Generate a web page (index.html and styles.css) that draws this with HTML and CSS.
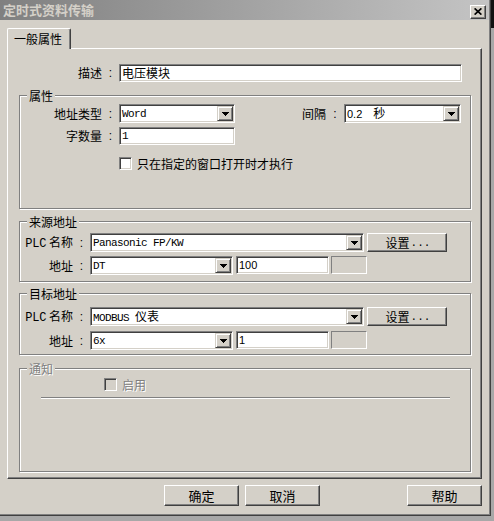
FILE: index.html
```html
<!DOCTYPE html>
<html>
<head>
<meta charset="utf-8">
<title>定时式资料传输</title>
<link rel="stylesheet" href="styles.css">
</head>
<body>
<div class="window">
  <div class="frame">
    <div class="titlebar">
      <span class="title">定时式资料传输</span>
      <span class="close"><svg width="8" height="7" viewBox="0 0 8 7"><path d="M0.6 0.4L7.4 6.6M7.4 0.4L0.6 6.6" stroke="#000" stroke-width="1.7" fill="none"/></svg></span>
    </div>
    <div class="content">
      <div class="tabs"><div class="tab">一般属性</div></div>
      <div class="panel">
        <div class="row r-desc">
          <span class="lbl w94">描述</span><span class="colon">:</span>
          <div class="edit w343"><span class="cjk">电压模块</span></div>
        </div>

        <div class="group g-attr">
          <div class="legend">属性</div>
          <div class="row r-a1">
            <span class="lbl w82">地址类型</span><span class="colon">:</span>
            <div class="combo w116"><span class="val mono">Word</span><span class="dd"><svg width="7" height="4" viewBox="0 0 7 4"><polygon points="0,0 7,0 3.5,4" fill="#000"/></svg></span></div>
            <span class="lbl w24 gap67">间隔</span><span class="colon w18">:</span>
            <div class="combo w117"><span class="val sans">0.2<span class="sec">秒</span></span><span class="dd"><svg width="7" height="4" viewBox="0 0 7 4"><polygon points="0,0 7,0 3.5,4" fill="#000"/></svg></span></div>
          </div>
          <div class="row r-a2">
            <span class="lbl w82">字数量</span><span class="colon">:</span>
            <div class="edit w116"><span class="mono">1</span></div>
          </div>
          <div class="row r-a3">
            <span class="cb ml99"></span><span class="cblabel">只在指定的窗口打开时才执行</span>
          </div>
        </div>

        <div class="group g-src">
          <div class="legend">来源地址</div>
          <div class="row r-s1">
            <span class="lbl w53"><span class="plc">PLC</span> 名称</span><span class="colon">:</span>
            <div class="combo w274"><span class="val mono">Panasonic FP/KW</span><span class="dd"><svg width="7" height="4" viewBox="0 0 7 4"><polygon points="0,0 7,0 3.5,4" fill="#000"/></svg></span></div>
            <div class="pbtn setbtn">设置<span class="dots">...</span></div>
          </div>
          <div class="row r-s2">
            <span class="lbl w53">地址</span><span class="colon">:</span>
            <div class="combo w143"><span class="val mono">DT</span><span class="dd"><svg width="7" height="4" viewBox="0 0 7 4"><polygon points="0,0 7,0 3.5,4" fill="#000"/></svg></span></div>
            <div class="edit w93 ml3"><span class="sans">100</span></div>
            <div class="disbox"></div>
          </div>
        </div>

        <div class="group g-dst">
          <div class="legend">目标地址</div>
          <div class="row r-d1">
            <span class="lbl w53"><span class="plc">PLC</span> 名称</span><span class="colon">:</span>
            <div class="combo w274"><span class="val mono">MODBUS <span class="cjk">仪表</span></span><span class="dd"><svg width="7" height="4" viewBox="0 0 7 4"><polygon points="0,0 7,0 3.5,4" fill="#000"/></svg></span></div>
            <div class="pbtn setbtn">设置<span class="dots">...</span></div>
          </div>
          <div class="row r-d2">
            <span class="lbl w53">地址</span><span class="colon">:</span>
            <div class="combo w143"><span class="val mono">6x</span><span class="dd"><svg width="7" height="4" viewBox="0 0 7 4"><polygon points="0,0 7,0 3.5,4" fill="#000"/></svg></span></div>
            <div class="edit w93 ml3"><span class="sans">1</span></div>
            <div class="disbox"></div>
          </div>
        </div>

        <div class="group g-notify">
          <div class="legend disabled">通知</div>
          <div class="row r-n1">
            <span class="cb off ml84"></span><span class="cblabel disabled">启用</span>
          </div>
          <div class="sep"></div>
        </div>
      </div>

      <div class="buttons">
        <div class="pbtn dlgbtn mr6">确定</div>
        <div class="pbtn dlgbtn mr87">取消</div>
        <div class="pbtn dlgbtn">帮助</div>
      </div>
    </div>
  </div>
</div>
</body>
</html>
```

FILE: styles.css
```css
* { box-sizing: border-box; }

html, body { margin: 0; padding: 0; }

body {
  width: 494px;
  height: 521px;
  overflow: hidden;
  background: linear-gradient(#111 0, #111 28px, #a8a8a8 28px);
  font-family: "Noto Sans CJK SC", sans-serif;
  font-size: 12px;
  color: #000;
}

.window {
  width: 491px;
  height: 516px;
  background: #808080;
  border-right: 1px solid #404040;
  border-bottom: 1px solid #404040;
  padding: 0 1px 1px 0;
}

.frame {
  width: 100%;
  height: 100%;
  background: #d4d0c8;
}

.titlebar {
  height: 20px;
  background: linear-gradient(to right, #808080, #c4c4c4);
  display: flex;
  justify-content: space-between;
  align-items: flex-start;
}

.title {
  color: #d4d0c8;
  font-weight: bold;
  font-size: 13px;
  line-height: 20px;
  padding-left: 3px;
}

.close {
  width: 16px;
  height: 14px;
  margin: 5px 3px 0 0;
  background: #d4d0c8;
  border: 1px solid;
  border-color: #fff #404040 #404040 #fff;
  box-shadow: inset -1px -1px 0 #808080;
  display: flex;
  align-items: center;
  justify-content: center;
  padding-bottom: 1px;
}
.close svg { display: block; }

.content { padding-left: 7px; }

.tabs { display: flex; margin-top: 8px; }

.tab {
  position: relative;
  z-index: 1;
  width: 64px;
  height: 21px;
  margin-bottom: -1px;
  background: #d4d0c8;
  border-left: 1px solid #fff;
  border-top: 1px solid #fff;
  border-right: 1px solid #404040;
  box-shadow: inset -1px 0 0 #808080;
  border-top-left-radius: 2px;
  border-top-right-radius: 2px;
  padding-left: 6px;
  line-height: 19px;
  white-space: nowrap;
}

.panel {
  width: 475px;
  height: 431px;
  border: 1px solid;
  border-color: #fff #404040 #404040 #fff;
  box-shadow: inset -1px -1px 0 #808080;
}

.row { display: flex; align-items: center; }

.lbl { text-align: right; white-space: nowrap; line-height: 14px; }
.plc {
  font-family: "Liberation Mono", monospace;
  font-size: 12px;
  letter-spacing: -0.2px;
  vertical-align: 0.5px;
}
.colon {
  width: 17px;
  text-align: center;
  font-family: "Liberation Sans", sans-serif;
  font-size: 12px;
  line-height: 14px;
}
.w18 { width: 18px; }
.w24 { width: 24px; flex: none; }
.w53 { width: 53px; flex: none; }
.w82 { width: 82px; flex: none; }
.w94 { width: 94px; flex: none; }
.gap67 { margin-left: 67px; }

.w93 { width: 93px; }
.w116 { width: 116px; }
.w117 { width: 117px; }
.w143 { width: 143px; }
.w274 { width: 274px; }
.w343 { width: 343px; }
.ml3 { margin-left: 3px; }
.ml84 { margin-left: 84px; }
.ml99 { margin-left: 99px; }
.mr6 { margin-right: 6px; }
.mr87 { margin-right: 87px; }

.r-desc { margin-top: 15px; height: 18px; }

.edit {
  height: 18px;
  flex: none;
  background: #fff;
  border: 1px solid;
  border-color: #808080 #fff #fff #808080;
  box-shadow: inset 1px 1px 0 #404040, inset -1px -1px 0 #d4d0c8;
  padding-left: 2px;
  display: flex;
  align-items: center;
  overflow: hidden;
  white-space: nowrap;
}

.combo {
  height: 19px;
  flex: none;
  display: flex;
  align-items: center;
  background: #fff;
  border: 1px solid;
  border-color: #808080 #fff #fff #808080;
  box-shadow: inset 1px 1px 0 #404040, inset -1px -1px 0 #d4d0c8;
  padding-left: 2px;
  white-space: nowrap;
}
.combo .val { flex: 1; }

.dd {
  width: 16px;
  height: 15px;
  margin-right: 1px;
  flex: none;
  background: #d4d0c8;
  border: 1px solid;
  border-color: #d4d0c8 #404040 #404040 #d4d0c8;
  box-shadow: inset 1px 1px 0 #fff, inset -1px -1px 0 #808080;
  display: flex;
  align-items: center;
  justify-content: center;
}
.dd svg { display: block; shape-rendering: crispEdges; }

.mono {
  font-family: "Liberation Mono", monospace;
  font-size: 11px;
  letter-spacing: -0.6px;
  line-height: 14px;
}
.mono .cjk {
  font-family: "Noto Sans CJK SC", sans-serif;
  font-size: 12px;
  letter-spacing: 0;
}
.sans {
  font-family: "Liberation Sans", sans-serif;
  font-size: 11px;
  line-height: 14px;
}
.sans .sec {
  font-family: "Noto Sans CJK SC", sans-serif;
  font-size: 12px;
  margin-left: 11px;
}
.cjk { line-height: 14px; }

.group {
  margin-left: 11px;
  width: 452px;
  border: 1px solid #808080;
  box-shadow: 1px 1px 0 #fff, inset 1px 1px 0 #fff;
}

.legend {
  width: max-content;
  margin: -7px 0 0 7px;
  padding: 0 2px;
  height: 13px;
  line-height: 13px;
  background: #d4d0c8;
  white-space: nowrap;
}

.disabled {
  color: #808080;
  text-shadow: 1px 1px 0 #fff;
}

.g-attr { margin-top: 13px; height: 114px; }
.r-a1 { margin-top: 2px; height: 19px; }
.r-a2 { margin-top: 4px; height: 18px; }
.r-a3 { margin-top: 12px; height: 13px; }

.g-src { margin-top: 12px; height: 61px; }
.r-s1 { margin-top: 5px; height: 19px; }
.r-s2 { margin-top: 4px; height: 19px; align-items: flex-start; }

.g-dst { margin-top: 11px; height: 62px; }
.r-d1 { margin-top: 7px; height: 19px; }
.r-d2 { margin-top: 5px; height: 19px; align-items: flex-start; }
.r-s2 .lbl, .r-d2 .lbl, .r-s2 .colon, .r-d2 .colon { align-self: center; }

.g-notify { margin-top: 13px; height: 104px; }
.r-n1 { margin-top: 3px; height: 13px; }

.cb {
  width: 13px;
  height: 13px;
  flex: none;
  background: #fff;
  border: 1px solid;
  border-color: #808080 #fff #fff #808080;
  box-shadow: inset 1px 1px 0 #404040, inset -1px -1px 0 #d4d0c8;
}
.cb.off { background: #d4d0c8; }
.cblabel { margin-left: 5px; line-height: 14px; white-space: nowrap; }

.sep {
  margin: 6px 0 0 21px;
  width: 409px;
  height: 2px;
  border-top: 1px solid #808080;
  border-bottom: 1px solid #fff;
}

.disbox {
  width: 36px;
  height: 18px;
  margin-left: 2px;
  border: 1px solid;
  border-color: #808080 #fff #fff #808080;
  background: #d4d0c8;
}

.pbtn {
  background: #d4d0c8;
  border: 1px solid;
  border-color: #fff #404040 #404040 #fff;
  box-shadow: inset -1px -1px 0 #808080;
  display: flex;
  align-items: center;
  justify-content: center;
  white-space: nowrap;
  line-height: 14px;
}

.setbtn {
  width: 80px;
  height: 19px;
  margin-left: 3px;
  padding-left: 2px;
}
.dots {
  font-family: "Liberation Mono", monospace;
  font-size: 11px;
  margin-left: 1px;
}

.buttons {
  width: 475px;
  margin-top: 6px;
  display: flex;
  justify-content: flex-end;
}

.dlgbtn {
  width: 75px;
  height: 21px;
  font-size: 13px;
}
```
